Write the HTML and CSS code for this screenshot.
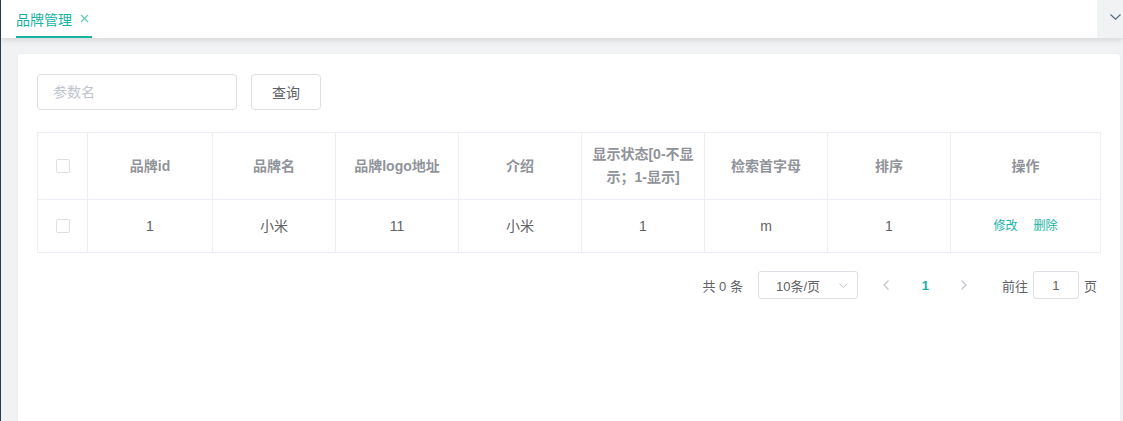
FILE: index.html
```html
<!DOCTYPE html>
<html>

<head>
    <meta charset="utf-8">
    <meta name="viewport" content="width=device-width, initial-scale=1">
    <title>品牌管理</title>
    <link rel="stylesheet" href="styles.css">
</head>

<body>
    <div class="layout">
        <div class="sidebar-edge"></div>
        <div class="main">
            <div class="tags-bar">
                <div class="tag active">
                    <span class="tag-title">品牌管理</span>
                    <svg class="tag-close" width="9" height="9" viewBox="0 0 9 9">
                        <path d="M1 1L8 8M8 1L1 8" stroke="currentColor" stroke-width="1.1" fill="none" />
                    </svg>
                </div>
                <div class="tags-more">
                    <svg width="11" height="6" viewBox="0 0 11 6">
                        <path d="M0.5 0.5L5.5 5.2L10.5 0.5" stroke="#5a6b82" stroke-width="1.2" fill="none" />
                    </svg>
                </div>
            </div>

            <div class="app-main">
                <div class="card">
                    <form class="search-form" onsubmit="return false">
                        <input class="search-input" type="text" placeholder="参数名" autocomplete="off">
                        <button class="btn" type="button">查询</button>
                    </form>

                    <table class="data-table">
                        <colgroup>
                            <col style="width:50px">
                            <col style="width:125px">
                            <col style="width:123px">
                            <col style="width:123px">
                            <col style="width:123px">
                            <col style="width:123px">
                            <col style="width:123px">
                            <col style="width:123px">
                            <col style="width:150px">
                        </colgroup>
                        <thead>
                            <tr>
                                <th><span class="checkbox"></span></th>
                                <th>品牌id</th>
                                <th>品牌名</th>
                                <th>品牌logo地址</th>
                                <th>介绍</th>
                                <th>显示状态[0-不显<br>示；1-显示]</th>
                                <th>检索首字母</th>
                                <th>排序</th>
                                <th>操作</th>
                            </tr>
                        </thead>
                        <tbody>
                            <tr>
                                <td><span class="checkbox"></span></td>
                                <td>1</td>
                                <td>小米</td>
                                <td>11</td>
                                <td>小米</td>
                                <td>1</td>
                                <td>m</td>
                                <td>1</td>
                                <td>
                                    <a class="text-btn">修改</a>
                                    <a class="text-btn">删除</a>
                                </td>
                            </tr>
                        </tbody>
                    </table>

                    <div class="pagination">
                        <span class="total">共 0 条</span>
                        <div class="sizes">
                            <span class="sizes-text">10条/页</span>
                            <svg class="sizes-arrow" width="9" height="5" viewBox="0 0 9 5">
                                <path d="M0.5 0.5L4.5 4.5L8.5 0.5" stroke="#c0c4cc" stroke-width="1" fill="none" />
                            </svg>
                        </div>
                        <span class="pager-btn">
                            <svg width="6" height="10" viewBox="0 0 6 10">
                                <path d="M5.5 0.5L1 5L5.5 9.5" stroke="#c0c4cc" stroke-width="1.2" fill="none" />
                            </svg>
                        </span>
                        <span class="pager-num">1</span>
                        <span class="pager-btn">
                            <svg width="6" height="10" viewBox="0 0 6 10">
                                <path d="M0.5 0.5L5 5L0.5 9.5" stroke="#c0c4cc" stroke-width="1.2" fill="none" />
                            </svg>
                        </span>
                        <span class="jumper">
                            前往
                            <input class="jumper-input" type="text" value="1">
                            页
                        </span>
                    </div>
                </div>
            </div>
        </div>
    </div>
</body>

</html>
```

FILE: styles.css
```css
html,
body {
    margin: 0;
    height: 100%;
    overflow: hidden;
}

body {
    background-color: #f0f2f3;
    color: #606266;
    font-family: "Liberation Sans", "Noto Sans CJK SC", sans-serif;
    font-size: 14px;
}

.layout {
    display: flex;
    height: 100%;
}

.sidebar-edge {
    width: 1px;
    background-color: #2d3a4b;
}

.main {
    flex: 1;
    min-width: 0;
}

.tags-bar {
    display: flex;
    height: 38px;
    background-color: #fff;
    box-shadow: 0 2px 6px rgba(0, 0, 0, 0.12);
    position: relative;
    z-index: 2;
}

.tag {
    display: flex;
    align-items: center;
    margin-left: 15px;
    padding: 0 3px 0 0;
    height: 36px;
    color: #17b3a3;
    border-bottom: 2px solid #17b3a3;
    box-sizing: border-box;
    height: 38px;
}

.tag-title {
    font-size: 14px;
    padding-top: 1px;
}

.tag-close {
    margin-left: 8px;
    margin-top: 1px;
    color: #5cc7bc;
}

.tags-more {
    margin-left: auto;
    width: 26px;
    background-color: #f0f2f3;
    display: flex;
    align-items: center;
    justify-content: flex-end;
    padding-right: 2px;
    padding-bottom: 4px;
    box-sizing: border-box;
}

.app-main {
    padding: 15px 2px 0 16px;
}

.card {
    background-color: #fff;
    border: 1px solid #ebeef5;
    border-radius: 4px;
    padding: 20px 19px 20px 19px;
    min-height: 420px;
}

.search-form {
    display: flex;
    margin: 0 0 22px 0;
}

.search-input {
    width: 200px;
    height: 36px;
    box-sizing: border-box;
    border: 1px solid #dcdfe6;
    border-radius: 4px;
    padding: 0 15px;
    font-family: inherit;
    font-size: 14px;
    color: #606266;
    outline: none;
}

.search-input::placeholder {
    color: #c0c4cc;
}

.btn {
    margin-left: 14px;
    width: 70px;
    height: 36px;
    border: 1px solid #dcdfe6;
    border-radius: 4px;
    background-color: #fff;
    color: #606266;
    font-family: inherit;
    font-size: 14px;
    padding: 0;
}

.data-table {
    width: 1063px;
    border-collapse: collapse;
    table-layout: fixed;
    border: 1px solid #ebeef5;
}

.data-table th,
.data-table td {
    border: 1px solid #ebeef5;
    text-align: center;
    vertical-align: middle;
    padding: 0 10px;
}

.data-table th {
    height: 66px;
    color: #909399;
    font-weight: bold;
    line-height: 23px;
}

.data-table td {
    height: 52px;
    color: #606266;
    line-height: 23px;
}

.checkbox {
    display: inline-block;
    width: 14px;
    height: 14px;
    box-sizing: border-box;
    border: 1px solid #dcdfe6;
    border-radius: 2px;
    vertical-align: middle;
    margin-top: -2px;
}

.text-btn {
    color: #17b3a3;
    font-size: 12px;
    margin: 0 6px;
    cursor: pointer;
}

.pagination {
    display: flex;
    align-items: center;
    justify-content: flex-end;
    margin-top: 18px;
    padding-right: 4px;
    font-size: 13px;
    color: #606266;
    height: 28px;
}

.total {
    margin-right: 15px;
}

.sizes {
    position: relative;
    width: 100px;
    height: 28px;
    box-sizing: border-box;
    border: 1px solid #dcdfe6;
    border-radius: 3px;
    display: flex;
    align-items: center;
    justify-content: center;
    padding-right: 22px;
    margin-right: 9px;
}

.sizes-text {
    padding-left: 2px;
}

.sizes-arrow {
    position: absolute;
    right: 9px;
    top: 11px;
}

.pager-btn,
.pager-num {
    width: 39px;
    height: 28px;
    display: flex;
    align-items: center;
    justify-content: center;
}

.pager-num {
    color: #17b3a3;
    font-weight: bold;
}

.jumper {
    display: flex;
    align-items: center;
    margin-left: 18px;
}

.jumper-input {
    width: 46px;
    height: 28px;
    box-sizing: border-box;
    margin: 0 5px;
    border: 1px solid #dcdfe6;
    border-radius: 3px;
    text-align: center;
    font-family: inherit;
    font-size: 13px;
    color: #606266;
    outline: none;
    padding: 0;
}
```
